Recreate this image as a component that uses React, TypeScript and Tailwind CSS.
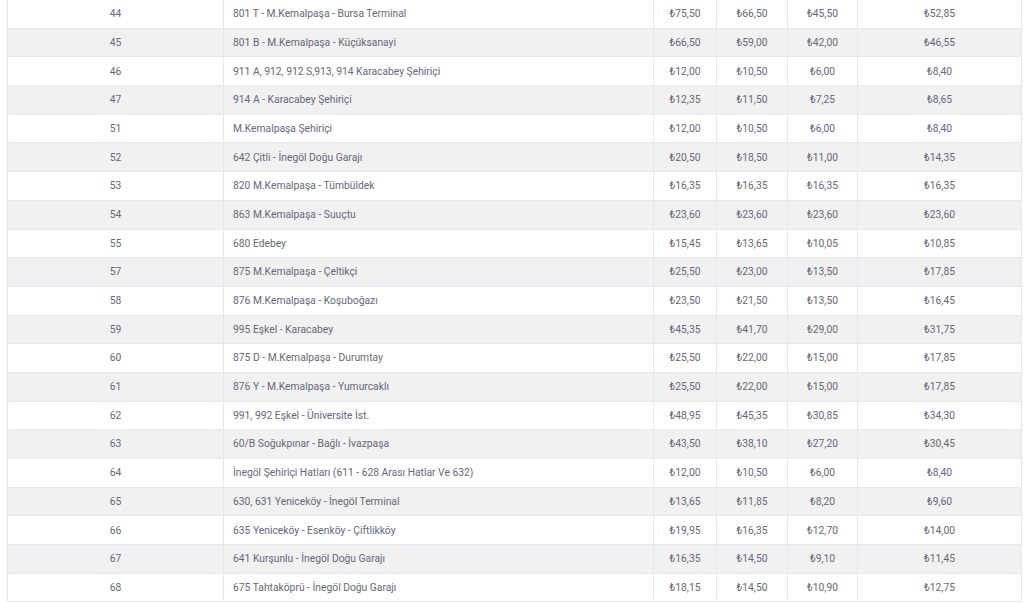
const rows: [string, string, string, string, string, string][] = [
  ["44", "801 T - M.Kemalpaşa - Bursa Terminal", "₺75,50", "₺66,50", "₺45,50", "₺52,85"],
  ["45", "801 B - M.Kemalpaşa - Küçüksanayi", "₺66,50", "₺59,00", "₺42,00", "₺46,55"],
  ["46", "911 A, 912, 912 S,913, 914 Karacabey Şehiriçi", "₺12,00", "₺10,50", "₺6,00", "₺8,40"],
  ["47", "914 A - Karacabey Şehiriçi", "₺12,35", "₺11,50", "₺7,25", "₺8,65"],
  ["51", "M.Kemalpaşa Şehiriçi", "₺12,00", "₺10,50", "₺6,00", "₺8,40"],
  ["52", "642 Çitli - İnegöl Doğu Garajı", "₺20,50", "₺18,50", "₺11,00", "₺14,35"],
  ["53", "820 M.Kemalpaşa - Tümbüldek", "₺16,35", "₺16,35", "₺16,35", "₺16,35"],
  ["54", "863 M.Kemalpaşa - Suuçtu", "₺23,60", "₺23,60", "₺23,60", "₺23,60"],
  ["55", "680 Edebey", "₺15,45", "₺13,65", "₺10,05", "₺10,85"],
  ["57", "875 M.Kemalpaşa - Çeltikçi", "₺25,50", "₺23,00", "₺13,50", "₺17,85"],
  ["58", "876 M.Kemalpaşa - Koşuboğazı", "₺23,50", "₺21,50", "₺13,50", "₺16,45"],
  ["59", "995 Eşkel - Karacabey", "₺45,35", "₺41,70", "₺29,00", "₺31,75"],
  ["60", "875 D - M.Kemalpaşa - Durumtay", "₺25,50", "₺22,00", "₺15,00", "₺17,85"],
  ["61", "876 Y - M.Kemalpaşa - Yumurcaklı", "₺25,50", "₺22,00", "₺15,00", "₺17,85"],
  ["62", "991, 992 Eşkel - Üniversite İst.", "₺48,95", "₺45,35", "₺30,85", "₺34,30"],
  ["63", "60/B Soğukpınar - Bağlı - İvazpaşa", "₺43,50", "₺38,10", "₺27,20", "₺30,45"],
  ["64", "İnegöl Şehiriçi Hatları (611 - 628 Arası Hatlar Ve 632)", "₺12,00", "₺10,50", "₺6,00", "₺8,40"],
  ["65", "630, 631 Yeniceköy - İnegöl Terminal", "₺13,65", "₺11,85", "₺8,20", "₺9,60"],
  ["66", "635 Yeniceköy - Esenköy - Çiftlikköy", "₺19,95", "₺16,35", "₺12,70", "₺14,00"],
  ["67", "641 Kurşunlu - İnegöl Doğu Garajı", "₺16,35", "₺14,50", "₺9,10", "₺11,45"],
  ["68", "675 Tahtaköprü - İnegöl Doğu Garajı", "₺18,15", "₺14,50", "₺10,90", "₺12,75"],
];

export default function App() {
  return (
    <div className="h-[603px] overflow-hidden bg-white font-['Roboto',sans-serif] text-[10.3px] text-[#66667c]">
      <div className="ml-[7px] mt-[-1px] w-[1015px] border-x border-b border-[#e6e6f3]">
        {rows.map((r, i) => (
          <div
            key={r[0]}
            className={`grid h-[28.7px] grid-cols-[216px_430px_63px_71px_70px_1fr] items-stretch divide-x divide-[#e6e6f3] border-t border-[#e6e6f3] ${
              i % 2 === 1 ? "bg-[#f1f1f1]" : "bg-white"
            }`}
          >
            <div className="flex items-center justify-center">{r[0]}</div>
            <div className="flex items-center pl-[9px]">{r[1]}</div>
            <div className="flex items-center justify-center">{r[2]}</div>
            <div className="flex items-center justify-center">{r[3]}</div>
            <div className="flex items-center justify-center">{r[4]}</div>
            <div className="flex items-center justify-center">{r[5]}</div>
          </div>
        ))}
      </div>
    </div>
  );
}
